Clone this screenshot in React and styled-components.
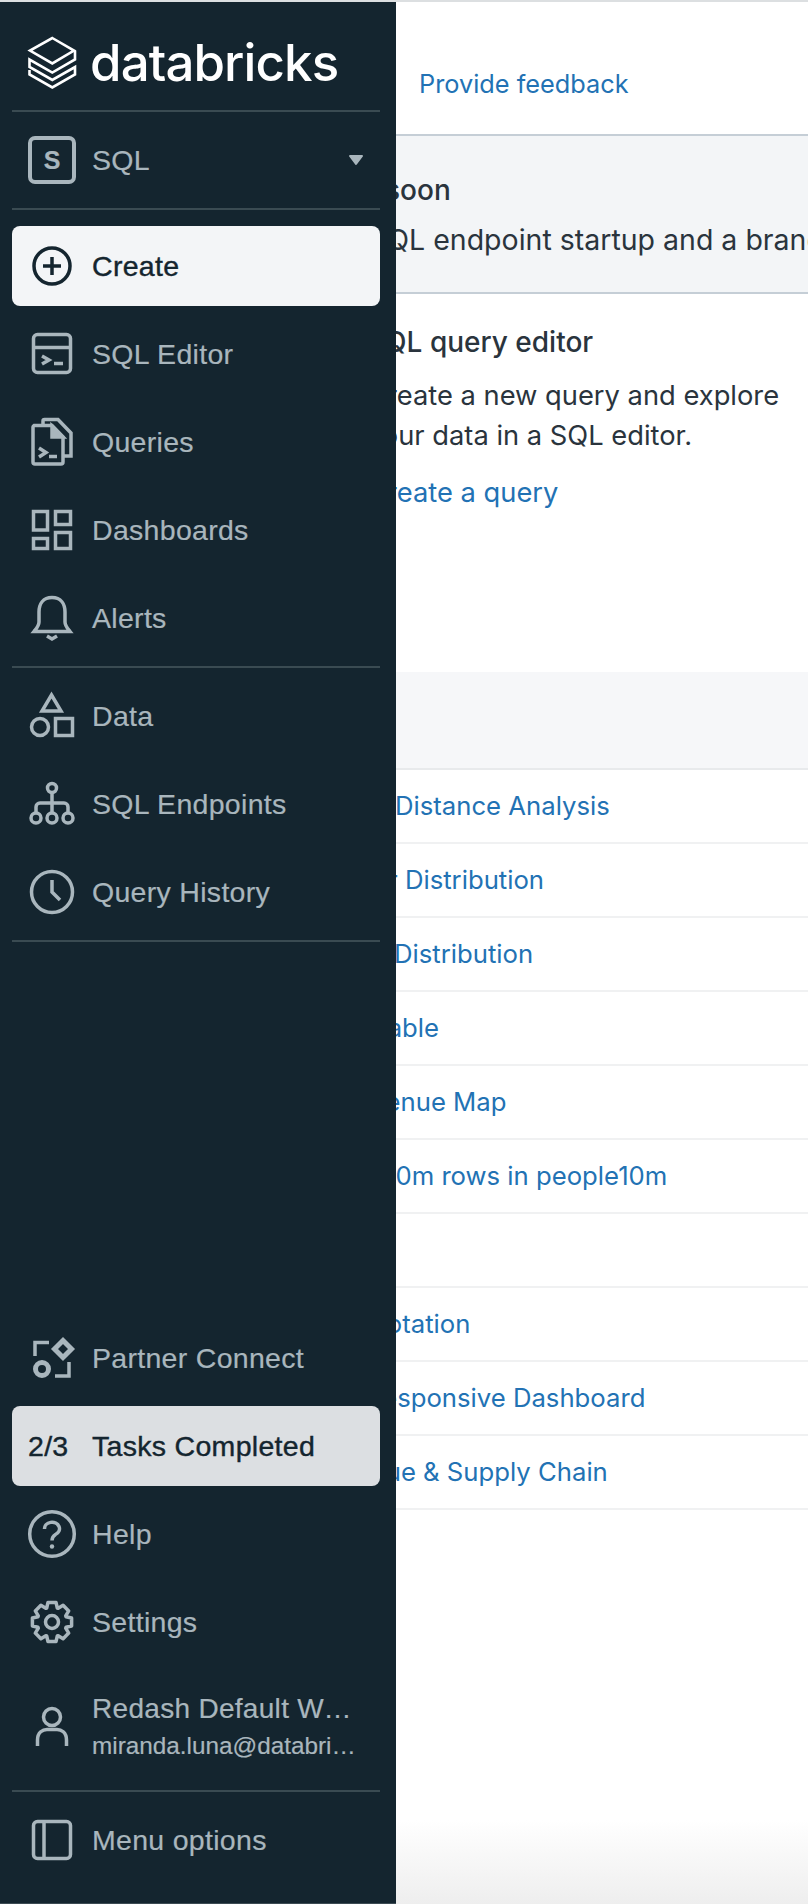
import React from 'react';
import styled, { createGlobalStyle } from 'styled-components';

const GlobalStyle = createGlobalStyle`
  html, body {
    margin: 0;
    padding: 0;
    background: #fff;
  }
`;

const Page = styled.div`
  position: relative;
  width: 808px;
  height: 1904px;
  box-sizing: border-box;
  border-top: 2px solid #dcdfe1;
  overflow: hidden;
  font-family: Inter, "Liberation Sans", sans-serif;
`;

/* sidebar drawer lies over the page content */
const Sidebar = styled.nav`
  position: absolute;
  top: 0;
  left: 0;
  bottom: 0;
  width: 396px;
  box-sizing: border-box;
  padding: 0 16px 23px 12px;
  display: flex;
  flex-direction: column;
  background: #14252f;
  border-bottom: 1px solid #3c4b53;
  font-family: "Liberation Sans", Arial, sans-serif;
`;

const Brand = styled.div`
  height: 108px;
  flex: none;
  display: flex;
  align-items: center;
  gap: 12px;
  padding-left: 14px;
  padding-top: 12px;
  box-sizing: border-box;
`;

const Wordmark = styled.span`
  font-family: Inter, sans-serif;
  font-size: 51px;
  font-weight: 500;
  line-height: 1;
  letter-spacing: -0.9px;
  color: #fff;
`;

const Divider = styled.div`
  flex: none;
  height: 2px;
  margin: ${p => p.$margin || '8px 0'};
  background: #3a4b52;
`;

const Row = styled.div`
  flex: none;
  height: ${p => p.$height || 80}px;
  display: flex;
  align-items: center;
  gap: 16px;
  padding-left: 16px;
  margin-bottom: ${p => p.$gap ?? 8}px;
  border-radius: 8px;
  font-size: 28.5px;
  letter-spacing: 0.3px;
  -webkit-text-stroke: ${p => (p.$active ? '0.4px' : '0.2px')};
  color: ${p => (p.$active ? '#14252f' : '#a9b6bd')};
  background: ${p => p.$active || 'transparent'};
  svg {
    flex: none;
    overflow: visible;
  }
`;

const Spacer = styled.div`
  flex: 1;
`;

const SBadge = styled.span`
  width: 48px;
  height: 48px;
  flex: none;
  box-sizing: border-box;
  display: flex;
  align-items: center;
  justify-content: center;
  border: 4px solid #a9b6bd;
  border-radius: 7px;
  font-size: 25px;
  font-weight: 700;
  letter-spacing: 0;
`;

const Label = styled.span`
  flex: 1;
  padding-top: 1px;
`;

const Caret = styled.svg`
  margin-right: 16px;
`;

const TaskCount = styled.span`
  width: 48px;
  flex: none;
`;

const UserInfo = styled.div`
  width: 266px;
  display: flex;
  flex-direction: column;
  gap: 5px;
`;

const UserLine = styled.div`
  font-size: ${p => p.$size}px;
  line-height: ${p => p.$line}px;
  letter-spacing: ${p => p.$spacing}px;
  overflow: hidden;
  white-space: nowrap;
  text-overflow: ellipsis;
`;

/* page content behind the drawer */
const Main = styled.main`
  height: 100%;
  display: flex;
  flex-direction: column;
  background: #fff;
`;

const TopBar = styled.div`
  height: 132px;
  flex: none;
  box-sizing: border-box;
  padding: 64px 0 0 419px;
`;

const Link = styled.a`
  font-size: ${p => p.$size || 25.7}px;
  line-height: 36px;
  color: #2272b4;
  white-space: nowrap;
`;

const Banner = styled.section`
  height: 160px;
  flex: none;
  box-sizing: border-box;
  padding-top: 34px;
  background: #f3f5f7;
  border-top: 2px solid #c5ced6;
  border-bottom: 2px solid #c5ced6;
  overflow: hidden;
  white-space: nowrap;
  color: #2a343d;
`;

const BannerTitle = styled.div`
  padding-left: ${p => p.$x}px;
  font-size: 28px;
  line-height: 40px;
  font-weight: 500;
`;

const BannerText = styled.div`
  padding-left: ${p => p.$x}px;
  margin-top: 10px;
  font-size: 28.5px;
  line-height: 40px;
`;

const Card = styled.section`
  height: 378px;
  flex: none;
  box-sizing: border-box;
  padding: 28px 0 0 367px;
  color: #2a343d;
`;

const CardTitle = styled.div`
  font-size: 28px;
  line-height: 40px;
  font-weight: 500;
`;

const CardText = styled.p`
  width: 440px;
  margin: 14px 0 19px;
  font-size: 27.3px;
  line-height: 40px;
`;

const TableHead = styled.div`
  height: 98px;
  flex: none;
  box-sizing: border-box;
  background: #f6f7f9;
  border-bottom: 2px solid #e8eaec;
`;

const TableRow = styled.div`
  height: 74px;
  flex: none;
  box-sizing: border-box;
  display: flex;
  align-items: center;
  padding-left: ${p => p.$x}px;
  border-bottom: 2px solid #f0f1f2;
`;

const BottomFade = styled.div`
  margin-top: auto;
  height: 84px;
  flex: none;
  background: linear-gradient(#fff, #eeeeee);
`;

const Icon = ({ children, color = '#a9b6bd', width = 3.5 }) => (
  <svg width="48" height="48" viewBox="0 0 48 48" fill="none" stroke={color} strokeWidth={width}>
    {children}
  </svg>
);

const LogoMark = () => (
  <svg width="52" height="54" viewBox="0 0 52 54" fill="none" stroke="#fff" strokeWidth="2.6">
    <path d="M26.3 3 L48 15.6 L26.3 28.4 L4 15.6 Z" />
    <path d="M49 16 V24.5 L26.3 37.6 L3.5 24.5 V32 L26.3 45 L49 32 V39.5 L26.3 52.5 L3.5 39.5 V35" />
  </svg>
);

const gearPath = (() => {
  const pts = [];
  for (let i = 0; i < 8; i++) {
    const a = (i * Math.PI) / 4;
    [[-0.36, 15], [-0.2, 20], [0.2, 20], [0.36, 15]].forEach(([d, r]) => {
      pts.push(`${(24 + r * Math.sin(a + d)).toFixed(1)} ${(24 - r * Math.cos(a + d)).toFixed(1)}`);
    });
  }
  return 'M' + pts.join(' L') + ' Z';
})();

const icons = {
  create: (
    <Icon color="#14252f">
      <circle cx="24" cy="24" r="18" />
      <path d="M24 15 V33 M15 24 H33" />
    </Icon>
  ),
  editor: (
    <Icon>
      <rect x="5.5" y="4.5" width="37" height="38" rx="4" />
      <path d="M5 17.5 H43 M14 26 L21 30 L14 34 M26 33.5 H35" />
    </Icon>
  ),
  queries: (
    <Icon>
      <path d="M6 7.5 H24 L35 19 V44 a2 2 0 0 1 -2 2 H7 a2 2 0 0 1 -2 -2 V9 a2 2 0 0 1 1 -1.5 Z" />
      <path d="M15 6 V3 a1.5 1.5 0 0 1 1.5 -1.5 H30 L43 15 V38 H36" />
      <path d="M24 8 L35 19 H24 Z" fill="#a9b6bd" />
      <path d="M11 30 L18 34.5 L11 39 M21 38.5 H29" />
    </Icon>
  ),
  dashboards: (
    <Icon>
      <rect x="5.5" y="5.5" width="14" height="18.5" />
      <rect x="27.5" y="5.5" width="15" height="13" />
      <rect x="5.5" y="32.5" width="14" height="10" />
      <rect x="27.5" y="26.5" width="15" height="16" />
    </Icon>
  ),
  alerts: (
    <Icon>
      <path d="M24 3.5 C15 3.5 11 10 11 18 V28 C11 32 8 35 6 37.5 H42 C40 35 37 32 37 28 V18 C37 10 33 3.5 24 3.5 Z" />
      <path d="M19 42 L24 45 L29 42" />
    </Icon>
  ),
  data: (
    <Icon>
      <path d="M23.5 3 L33 19 H14 Z" />
      <circle cx="12" cy="35" r="8.5" />
      <rect x="27.5" y="26.5" width="17" height="17" />
    </Icon>
  ),
  endpoints: (
    <Icon>
      <circle cx="24" cy="8" r="4.5" />
      <circle cx="8" cy="38" r="5" />
      <circle cx="24" cy="38" r="5" />
      <circle cx="40" cy="38" r="5" />
      <path d="M24 13 V33 M8 33 V27 a4 4 0 0 1 4 -4 H36 a4 4 0 0 1 4 4 V33" />
    </Icon>
  ),
  history: (
    <Icon>
      <circle cx="24" cy="24" r="20.5" />
      <path d="M24 12 V24 L32 32" />
    </Icon>
  ),
  partner: (
    <Icon>
      <path d="M21 8.5 H7 V22 M27 42 H41 V28" />
      <path d="M35 6.5 L43.5 15 L35 23.5 L26.5 15 Z" strokeWidth="5" />
      <circle cx="14" cy="35" r="6.5" strokeWidth="5" />
    </Icon>
  ),
  help: (
    <Icon>
      <circle cx="24" cy="24" r="22.3" />
      <path d="M16.5 19 a7.5 6.5 0 1 1 11 5.5 c-2.5 1.5 -3.5 2.5 -3.5 6" />
      <circle cx="24" cy="36.5" r="2.2" fill="#a9b6bd" stroke="none" />
    </Icon>
  ),
  settings: (
    <Icon>
      <path d={gearPath} strokeLinejoin="round" />
      <circle cx="24" cy="24" r="6.5" />
    </Icon>
  ),
  user: (
    <Icon>
      <circle cx="24" cy="15" r="8.5" />
      <path d="M9.5 44 V38 C9.5 30 15 27.5 19 27.5 H29 C33 27.5 38.5 30 38.5 38 V44" />
    </Icon>
  ),
  menu: (
    <Icon>
      <rect x="5.5" y="5.5" width="37" height="37" rx="4" />
      <path d="M16 5 V43" />
    </Icon>
  ),
};

const topItems = [
  [
    ['editor', 'SQL Editor'],
    ['queries', 'Queries'],
    ['dashboards', 'Dashboards'],
    ['alerts', 'Alerts'],
  ],
  [
    ['data', 'Data'],
    ['endpoints', 'SQL Endpoints'],
    ['history', 'Query History'],
  ],
];

const tableRows = [
  ['Distance Analysis', 395],
  ['r Distribution', 388],
  ['Distribution', 394],
  ['Table', 373],
  ['Revenue Map', 341],
  ['10m rows in people10m', 385],
  ['', 0],
  ['Quotation', 352],
  ['Responsive Dashboard', 366],
  ['Revenue & Supply Chain', 311],
];

const App = () => {
  return (
    <Page>
      <GlobalStyle />
      <Main>
        <TopBar>
          <Link $size={25.3}>Provide feedback</Link>
        </TopBar>
        <Banner>
          <BannerTitle $x={385}>soon</BannerTitle>
          <BannerText $x={369}>SQL endpoint startup and a brand new</BannerText>
        </Banner>
        <Card>
          <CardTitle>SQL query editor</CardTitle>
          <CardText>Create a new query and explore your data in a SQL editor.</CardText>
          <Link $size={27.3}>Create a query</Link>
        </Card>
        <TableHead />
        {tableRows.map(([name, x], i) => (
          <TableRow key={i} $x={x}>
            <Link>{name}</Link>
          </TableRow>
        ))}
        <BottomFade />
      </Main>
      <Sidebar>
        <Brand>
          <LogoMark />
          <Wordmark>databricks</Wordmark>
        </Brand>
        <Divider $margin="0 0 8px" />
        <Row $gap={0}>
          <SBadge>S</SBadge>
          <Label>SQL</Label>
          <Caret width="16" height="12" viewBox="0 0 16 12">
            <path d="M2 2 H14 L8 10 Z" fill="#a9b6bd" stroke="#a9b6bd" strokeWidth="2" strokeLinejoin="round" />
          </Caret>
        </Row>
        <Divider $margin="8px 0 16px" />
        <Row $active="#f3f5f7">
          {icons.create}
          <Label>Create</Label>
        </Row>
        {topItems.map((group, i) => (
          <React.Fragment key={i}>
            {group.map(([icon, name], j) => (
              <Row key={name} $gap={j === group.length - 1 ? 0 : 8}>
                {icons[icon]}
                <Label>{name}</Label>
              </Row>
            ))}
            <Divider />
          </React.Fragment>
        ))}
        <Spacer />
        <Row>
          {icons.partner}
          <Label>Partner Connect</Label>
        </Row>
        <Row $active="#dcdfe2">
          <TaskCount>2/3</TaskCount>
          <Label>Tasks Completed</Label>
        </Row>
        <Row>
          {icons.help}
          <Label>Help</Label>
        </Row>
        <Row>
          {icons.settings}
          <Label>Settings</Label>
        </Row>
        <Row $height={112} $gap={0}>
          {icons.user}
          <UserInfo>
            <UserLine $size={28} $line={34} $spacing={0.3}>Redash Default Workspace</UserLine>
            <UserLine $size={24.3} $line={30} $spacing={0}>miranda.luna@databricks.com</UserLine>
          </UserInfo>
        </Row>
        <Divider />
        <Row $gap={0}>
          {icons.menu}
          <Label>Menu options</Label>
        </Row>
      </Sidebar>
    </Page>
  );
};

export default App;
